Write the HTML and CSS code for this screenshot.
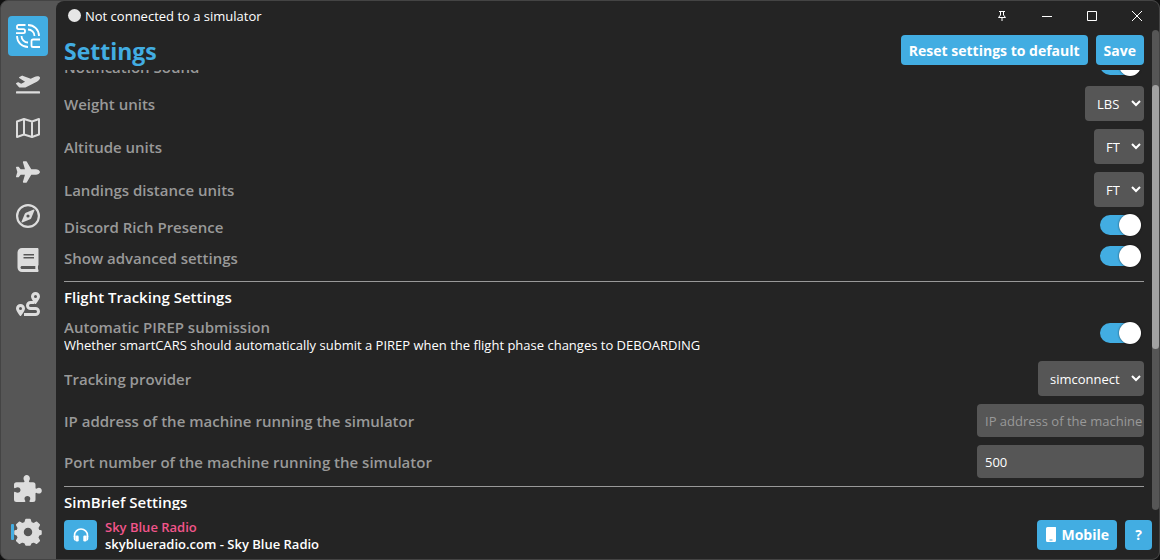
FILE: index.html
```html
<!DOCTYPE html>
<html lang="en">
<head>
    <meta charset="UTF-8">
    <meta name="viewport" content="width=device-width, initial-scale=1.0">
    <title>Settings</title>
    <link rel="stylesheet" href="styles.css">
</head>
<body>
    <div class="window">
        <nav class="sidebar">
            <a class="logo" href="#" aria-label="Home">
                <svg viewBox="0 0 24 24" fill="none" stroke="#fff" stroke-width="1.8">
                    <path d="M9.500 1H2.600A1.600 1.600 0 0 0 1 2.600v.9a1.600 1.600 0 0 0 1.600 1.600H7.400A1.600 1.600 0 0 1 9 6.700v.9A1.600 1.600 0 0 1 7.400 9.200H0"/>
                    <path d="M12 1A11 11 0 0 1 23 12"/>
                    <path d="M12 5.500A6.500 6.500 0 0 1 18.500 12"/>
                    <path d="M1 12A11 11 0 0 0 12 23"/>
                    <path d="M5.500 12A6.500 6.500 0 0 0 12 18.500"/>
                    <path d="M24 15.500h-6.900a1.600 1.600 0 0 0-1.600 1.600v4.300a1.600 1.600 0 0 0 1.600 1.600H24"/>
                </svg>
            </a>
            <a class="nav-link" href="#" aria-label="Flights">
                <svg viewBox="0 0 640 512"><path d="M624 448H16c-8.840 0-16 7.160-16 16v32c0 8.840 7.160 16 16 16h608c8.840 0 16-7.160 16-16v-32c0-8.840-7.160-16-16-16zM80.550 341.270c6.280 6.840 15.100 10.720 24.330 10.710l130.540-.18a65.620 65.620 0 0 0 29.640-7.120l290.960-147.650c26.740-13.570 50.710-32.940 67.020-58.310 18.310-28.480 20.300-49.090 13.070-63.650-7.210-14.570-24.740-25.270-58.250-27.450-29.850-1.940-59.540 5.920-86.280 19.480l-98.510 49.990-218.700-82.060a17.800 17.800 0 0 0-18-1.110L90.620 67.290c-10.670 5.410-13.250 19.650-5.170 28.530l156.220 98.100-103.210 52.380-72.350-36.470a17.800 17.800 0 0 0-16.070.02L9.910 230.220c-10.440 5.300-13.190 19.120-5.570 28.080l76.210 82.970z"/></svg>
            </a>
            <a class="nav-link" href="#" aria-label="Map">
                <svg viewBox="0 0 24 24" fill="none" stroke="currentColor" stroke-width="2" stroke-linejoin="round"><path d="M1 5.500L8 3l8 2.500L23 3v15.500L16 21l-8-2.500L1 21zM8 3v15.500M16 5.500V21"/></svg>
            </a>
            <a class="nav-link" href="#" aria-label="Aircraft">
                <svg viewBox="0 0 576 512"><path d="M480 192H365.710L260.610 8.060A16 16 0 0 0 246.710 0h-65.500c-10.630 0-18.300 10.170-15.380 20.390L214.860 192H112l-43.200-57.600c-3.020-4.030-7.770-6.400-12.800-6.400H16C5.600 128-2 137.780.490 147.880L32 256 .490 364.120C-2 374.220 5.600 384 16 384H56c5 0 9.780-2.370 12.800-6.400L112 320h102.860l-49 171.600c-2.920 10.220 4.750 20.400 15.380 20.400h65.500c5.740 0 11-3.080 13.890-8.060L365.710 320H480c35.350 0 96-28.650 96-64s-60.650-64-96-64z"/></svg>
            </a>
            <a class="nav-link" href="#" aria-label="Explore">
                <svg viewBox="0 0 24 24"><circle cx="12" cy="12" r="10.900" fill="none" stroke="currentColor" stroke-width="2.200"/><path fill-rule="evenodd" d="M17.700 5.500c.5-.2 1 .3.800.8l-3.300 7.900a2 2 0 0 1-1 1l-7.900 3.300c-.5.200-1-.3-.8-.8l3.300-7.900a2 2 0 0 1 1-1zM12 10.400a1.600 1.600 0 1 0 0 3.200 1.600 1.600 0 0 0 0-3.200z"/></svg>
            </a>
            <a class="nav-link" href="#" aria-label="Logbook">
                <svg viewBox="0 0 448 512"><path d="M448 360V24c0-13.300-10.700-24-24-24H96C43 0 0 43 0 96v320c0 53 43 96 96 96h328c13.300 0 24-10.700 24-24v-16c0-7.500-3.500-14.300-8.900-18.700-4.200-15.400-4.200-59.300 0-74.700 5.400-4.300 8.900-11.100 8.900-18.600zM128 134c0-3.300 2.700-6 6-6h212c3.300 0 6 2.700 6 6v20c0 3.300-2.700 6-6 6H134c-3.300 0-6-2.700-6-6v-20zm0 64c0-3.300 2.700-6 6-6h212c3.300 0 6 2.700 6 6v20c0 3.300-2.700 6-6 6H134c-3.300 0-6-2.700-6-6v-20zm253.400 250H96c-17.700 0-32-14.300-32-32 0-17.600 14.400-32 32-32h285.400c-1.900 17.100-1.900 46.900 0 64z"/></svg>
            </a>
            <a class="nav-link" href="#" aria-label="Routes">
                <svg viewBox="0 0 24 24"><path fill-rule="evenodd" d="M4.500 12A4.500 4.500 0 0 1 9 16.500c0 2-2.700 5.700-3.900 7.200a.8.8 0 0 1-1.200 0C2.700 22.200 0 18.500 0 16.500A4.500 4.500 0 0 1 4.500 12zm0 3a1.500 1.500 0 1 0 0 3 1.500 1.500 0 0 0 0-3zM19.500 0A4.500 4.500 0 0 1 24 4.500c0 2-2.700 5.700-3.900 7.200a.8.8 0 0 1-1.200 0C17.700 10.200 15 6.500 15 4.500A4.500 4.500 0 0 1 19.500 0zm0 3a1.500 1.500 0 1 0 0 3 1.500 1.500 0 0 0 0-3z"/><path fill="none" stroke="currentColor" stroke-width="3" d="M8 22.500h11.500a3 3 0 0 0 0-6h-5a3 3 0 0 1 0-6h4"/></svg>
            </a>
            <a class="nav-link nav-plugins" href="#" aria-label="Plugins">
                <svg viewBox="0 0 28 28"><path d="M10.500 7.500c0-.8-1-1.400-1-3C9.500 2.400 11 1 12.700 1s3.200 1.400 3.200 3.500c0 1.600-1 2.200-1 3 0 .5.400.8.900.8H19a2.500 2.500 0 0 1 2.500 2.500v3c0 .5.300.9.800.9.800 0 1-.9 2.500-.9 1.800 0 3 1.300 3 2.900s-1.200 2.900-3 2.900c-1.500 0-1.700-.9-2.500-.9-.5 0-.8.400-.8.900V25.500A2.500 2.500 0 0 1 19 28h-2.700c-.5 0-.9-.3-.9-.8 0-.8.900-1.200.9-2.500 0-1.600-1.200-2.600-2.900-2.600s-2.900 1-2.900 2.600c0 1.300.9 1.700.9 2.500 0 .5-.4.800-.9.800H2.500A2.500 2.500 0 0 1 0 25.500v-6.800c0-.5.300-.9.800-.9.800 0 1.200.9 2.800.9 1.800 0 2.900-1.200 2.900-2.700s-1.100-2.700-2.900-2.700c-1.600 0-2 .9-2.800.9-.5 0-.8-.4-.8-.9v-2.500a2.500 2.500 0 0 1 2.500-2.500h7.200c.5 0 .8-.3.800-.8z"/></svg>
            </a>
            <a class="nav-link nav-settings active" href="#" aria-label="Settings">
                <svg viewBox="-14 -14 28 28"><path fill-rule="evenodd" stroke="currentColor" stroke-width="1.500" stroke-linejoin="round" d="M-2-12.500h4l1 3.300 2.500 1 3.100-1.600 2.700 2.700-1.600 3.100 1 2.500 2.300.5v3l-2.300 1-1 2.500 1.600 3.100-2.700 2.700-3.100-1.600-2.500 1-1 2.300h-4l-1-2.300-2.500-1-3.100 1.600-2.700-2.700 1.600-3.100-1-2.500-2.300-1v-3l2.300-.5 1-2.500-1.600-3.100 2.700-2.700 3.100 1.600 2.500-1zM0-5A5 5 0 1 0 0 5 5 5 0 0 0 0-5z"/></svg>
            </a>
        </nav>

        <div class="main">
            <header class="titlebar">
                <span class="status-dot"></span>
                <span class="status-text">Not connected to a simulator</span>
                <div class="window-buttons">
                    <button type="button" aria-label="Pin"><svg viewBox="0 0 12 12"><path d="M3 1.500h6M4.500 1.500v3.500L2.500 7.500h7L7.500 5V1.500M6 7.500V11"/></svg></button>
                    <button type="button" aria-label="Minimize"><svg viewBox="0 0 12 12"><path d="M1 6.500h10"/></svg></button>
                    <button type="button" aria-label="Maximize"><svg viewBox="0 0 12 12"><path d="M1.500 1.500h9v9h-9z"/></svg></button>
                    <button type="button" aria-label="Close"><svg viewBox="0 0 12 12"><path d="M1 1l10 10M11 1L1 11"/></svg></button>
                </div>
            </header>

            <div class="content">
                <div class="page">
                    <div class="page-header">
                        <h1>Settings</h1>
                        <button type="button" class="btn">Reset settings to default</button>
                        <button type="button" class="btn">Save</button>
                    </div>

                    <form class="settings" id="settings">
                        <section class="group">
                            <div class="row">
                                <label for="sound">Notification Sound</label>
                                <input type="checkbox" class="toggle" id="sound" checked>
                            </div>
                            <div class="row">
                                <label for="weight">Weight units</label>
                                <select id="weight"><option>LBS</option></select>
                            </div>
                            <div class="row">
                                <label for="altitude">Altitude units</label>
                                <select id="altitude"><option>FT</option></select>
                            </div>
                            <div class="row">
                                <label for="landing">Landings distance units</label>
                                <select id="landing"><option>FT</option></select>
                            </div>
                            <div class="row">
                                <label for="discord">Discord Rich Presence</label>
                                <input type="checkbox" class="toggle" id="discord" checked>
                            </div>
                            <div class="row">
                                <label for="advanced">Show advanced settings</label>
                                <input type="checkbox" class="toggle" id="advanced" checked>
                            </div>
                        </section>

                        <hr>
                        <h2>Flight Tracking Settings</h2>
                        <div class="row">
                            <div>
                                <label for="pirep">Automatic PIREP submission</label>
                                <p class="hint">Whether smartCARS should automatically submit a PIREP when the flight phase changes to DEBOARDING</p>
                            </div>
                            <input type="checkbox" class="toggle" id="pirep" checked>
                        </div>
                        <div class="row">
                            <label for="provider">Tracking provider</label>
                            <select id="provider"><option>simconnect</option></select>
                        </div>
                        <div class="row">
                            <label for="ip">IP address of the machine running the simulator</label>
                            <input type="text" id="ip" placeholder="IP address of the machine">
                        </div>
                        <div class="row">
                            <label for="port">Port number of the machine running the simulator</label>
                            <input type="text" id="port" value="500">
                        </div>

                        <hr>
                        <h2>SimBrief Settings</h2>
                    </form>
                </div>
                <div class="scrollbar"><div class="thumb"></div></div>
            </div>

            <footer class="footer">
                <button type="button" class="btn btn-radio" aria-label="Radio">
                    <svg viewBox="0 0 16 16"><path fill="none" stroke="#fff" stroke-width="1.600" d="M1.500 10V8.500a6.500 6.500 0 0 1 13 0V10"/><rect x="2.500" y="8.500" width="3.200" height="6" rx="1.300"/><rect x="10.300" y="8.500" width="3.200" height="6" rx="1.300"/><path d="M.7 9.500c0-.6.800-1 1.800-1v5.500C1.300 13.500.7 12.500.7 11.500zM15.300 9.500c0-.6-.8-1-1.800-1v5.500c1.200-.5 1.800-1.500 1.800-2.500z"/></svg>
                </button>
                <div class="radio-info">
                    <span class="station">Sky Blue Radio</span>
                    <span class="track">skyblueradio.com - Sky Blue Radio</span>
                </div>
                <button type="button" class="btn btn-mobile">
                    <svg viewBox="0 0 12 16"><path fill-rule="evenodd" d="M2.500 0h6A1.500 1.500 0 0 1 11 1.500v12A1.500 1.500 0 0 1 9.500 15h-7A1.500 1.500 0 0 1 1 13.500v-12A1.500 1.500 0 0 1 2.500 0zM4.500 12.500v1h3v-1z"/></svg>
                    Mobile
                </button>
                <button type="button" class="btn btn-help">?</button>
            </footer>
        </div>
    </div>

    <script>
        document.getElementById('settings').scrollTop = 19;
    </script>
</body>
</html>
```
FILE: styles.css
```css
* {
    box-sizing: border-box;
}
body {
    margin: 0;
    background-color: #111;
    color: #fff;
    font-family: "Segoe UI", "Open Sans", "Noto Sans", sans-serif;
    font-size: 13px;
}
button, input, select {
    font-family: inherit;
    font-size: 13px;
    color: #fff;
}
.window {
    display: flex;
    height: 100vh;
    border: 1px solid #444;
    border-radius: 8px;
    background-color: #565656;
    overflow: hidden;
}

/* Sidebar */
.sidebar {
    width: 55px;
    flex-shrink: 0;
    display: flex;
    flex-direction: column;
    align-items: center;
    gap: 20px;
    padding: 15px 1px 15px 0;
}
.logo {
    display: flex;
    align-items: center;
    justify-content: center;
    width: 40px;
    height: 40px;
    margin-bottom: -4px;
    border-radius: 4px;
    background-color: #42ade2;
}
.logo svg {
    width: 24px;
    height: 24px;
}
.nav-link {
    display: flex;
    align-items: center;
    justify-content: center;
    width: 24px;
    height: 24px;
    color: #ddd;
    fill: currentColor;
}
.nav-link svg {
    width: 24px;
    height: 24px;
}
.nav-plugins {
    margin-top: auto;
}
.nav-plugins svg, .nav-settings svg {
    width: 28px;
    height: 28px;
    flex-shrink: 0;
}
.nav-settings {
    position: relative;
}
.active::before {
    content: "";
    position: absolute;
    left: -5px;
    top: 4px;
    width: 3px;
    height: 16px;
    border-radius: 1px;
    background-color: #42ade2;
}

/* Main area */
.main {
    flex: 1;
    min-width: 0;
    display: flex;
    flex-direction: column;
    background-color: #242424;
    border-top-left-radius: 8px;
}
.titlebar {
    display: flex;
    align-items: center;
    height: 29px;
    padding-left: 12px;
    flex-shrink: 0;
}
.status-dot {
    width: 13px;
    height: 13px;
    margin-right: 4px;
    border-radius: 50%;
    background-color: #e6e6e6;
}
.window-buttons {
    display: flex;
    margin-left: auto;
}
.window-buttons button {
    display: flex;
    align-items: center;
    justify-content: center;
    width: 45px;
    height: 29px;
    padding: 0;
    border: none;
    background: none;
}
.window-buttons svg {
    width: 12px;
    height: 12px;
    fill: none;
    stroke: #fff;
}

.content {
    flex: 1;
    min-height: 0;
    display: flex;
}
.page {
    flex: 1;
    min-width: 0;
    display: flex;
    flex-direction: column;
    padding: 0 8px;
}
.page-header {
    display: flex;
    align-items: center;
    gap: 8px;
    height: 40px;
    flex-shrink: 0;
}
h1 {
    flex: 1;
    margin: 0;
    padding-top: 2px;
    font-size: 23px;
    line-height: 30px;
    color: #42ade2;
}
.btn {
    height: 30px;
    padding: 0 8px;
    border: none;
    border-radius: 4px;
    background-color: #42ade2;
    font-size: 14px;
    font-weight: 700;
    cursor: pointer;
}
.settings {
    flex: 1;
    min-height: 0;
    overflow-y: auto;
    scrollbar-width: none;
}
.group {
    padding-bottom: 4px;
}
.row {
    display: flex;
    align-items: center;
    justify-content: space-between;
    padding: 4px 0;
}
.row label {
    display: block;
    padding-top: 1px;
    font-size: 15px;
    font-weight: 600;
    line-height: 22px;
    color: #999;
}
.hint {
    margin: 0;
    line-height: 15px;
}
select {
    height: 35px;
    padding: 0 8px;
    border: none;
    border-radius: 4px;
    background-color: #565656;
}
input[type="text"] {
    width: 167px;
    height: 33px;
    padding: 0 0 0 8px;
    border: none;
    border-radius: 4px;
    background-color: #565656;
}
input::placeholder {
    color: #999;
}
.toggle {
    appearance: none;
    display: flex;
    align-items: center;
    justify-content: flex-end;
    width: 40px;
    height: 20px;
    margin: 0 4px 3px 0;
    border-radius: 10px;
    background-color: #42ade2;
}
.toggle::before {
    content: "";
    flex-shrink: 0;
    width: 22px;
    height: 22px;
    margin-right: -1px;
    border-radius: 50%;
    background-color: #fff;
    box-shadow: 0 0 2px rgba(0,0,0,0.7);
}
hr {
    margin: 4px 0;
    border: none;
    border-top: 1px solid #999;
}
h2 {
    margin: 0 0 2px;
    font-size: 15px;
    font-weight: 600;
    line-height: 23px;
}
.scrollbar {
    width: 7px;
    border-radius: 4px;
    background-color: #565656;
}
.thumb {
    height: 55%;
    margin-top: 55px;
    border-radius: 4px;
    background-color: #a1a1a1;
}

/* Footer */
.footer {
    display: flex;
    align-items: center;
    gap: 8px;
    height: 49px;
    padding: 0 7px 0 8px;
    flex-shrink: 0;
}
.btn-radio {
    display: flex;
    align-items: center;
    justify-content: center;
    width: 33px;
    padding: 0;
}
.btn-radio svg {
    width: 16px;
    height: 16px;
    fill: #fff;
}
.radio-info {
    flex: 1;
    display: flex;
    flex-direction: column;
    padding-top: 2px;
    line-height: 17px;
    font-weight: 600;
}
.station {
    color: #f2558b;
}
.btn-mobile {
    display: flex;
    align-items: center;
    gap: 4px;
}
.btn-mobile svg {
    width: 12px;
    height: 16px;
    fill: #fff;
}
.btn-help {
    width: 27px;
    padding: 0;
}
```
